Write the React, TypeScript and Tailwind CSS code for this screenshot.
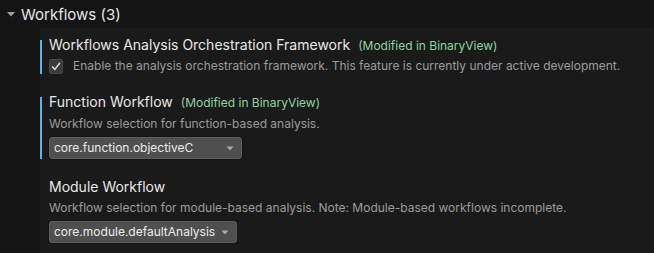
import React from "react";

type Setting = {
  title: string;
  modified?: string;
  description: string;
  kind: "checkbox" | "select";
  value?: string;
  selectWidth?: string;
};

const settings: Setting[] = [
  {
    title: "Workflows Analysis Orchestration Framework",
    modified: "(Modified in BinaryView)",
    description:
      "Enable the analysis orchestration framework. This feature is currently under active development.",
    kind: "checkbox",
  },
  {
    title: "Function Workflow",
    modified: "(Modified in BinaryView)",
    description: "Workflow selection for function-based analysis.",
    kind: "select",
    value: "core.function.objectiveC",
    selectWidth: "w-[193px]",
  },
  {
    title: "Module Workflow",
    description:
      "Workflow selection for module-based analysis. Note: Module-based workflows incomplete.",
    kind: "select",
    value: "core.module.defaultAnalysis",
    selectWidth: "w-[188px]",
  },
];

function Checkbox() {
  return (
    <div className="w-[14px] h-[15px] rounded-[2px] bg-[#3b3b3b] border border-[#474747] flex items-center justify-center shrink-0">
      <svg width="10" height="9" viewBox="0 0 10 9" fill="none">
        <path d="M1.5 4.8 L3.9 7.4 L8.6 1.2" stroke="#dcdcdc" strokeWidth="1.5" strokeLinecap="round" strokeLinejoin="round" />
      </svg>
    </div>
  );
}

function Select({ value, width }: { value: string; width: string }) {
  return (
    <div
      className={`${width} h-[22px] rounded-[3px] bg-[#4f4f4f] border border-[#5e5e5e] shadow-[0_0_0_1px_#141414] flex items-center justify-between pl-[4px] pr-[7px]`}
    >
      <span className="text-[12px] leading-none text-[#ececec] whitespace-nowrap">{value}</span>
      <svg width="8" height="5" viewBox="0 0 8 5" className="shrink-0">
        <path d="M0.5 0.5 H7.5 L4 4.5 Z" fill="#a8a8a8" />
      </svg>
    </div>
  );
}

function SettingItem({ s }: { s: Setting }) {
  return (
    <div className={`border-l-2 pl-[7px] ${s.modified ? "border-[#5cb8de]" : "border-transparent"}`}>
      <div className="flex items-baseline gap-[8px] leading-[10px]">
        <span className="text-[14px] text-[#e8e8e8]">{s.title}</span>
        {s.modified && <span className="text-[12px] text-[#8fd3a0]">{s.modified}</span>}
      </div>
      {s.kind === "checkbox" ? (
        <div className="flex items-center gap-[10px] mt-[7px]">
          <Checkbox />
          <span className="text-[12px] leading-[16px] text-[#9c9c9c]">{s.description}</span>
        </div>
      ) : (
        <>
          <div className="mt-[8px] text-[12px] leading-[16px] text-[#9c9c9c]">{s.description}</div>
          <div className="mt-[5px]">
            <Select value={s.value!} width={s.selectWidth!} />
          </div>
        </>
      )}
    </div>
  );
}

export default function App() {
  return (
    <div
      className="w-[654px] h-[253px] overflow-hidden bg-[#141414] flex flex-col"
      style={{ fontFamily: "Inter, 'Noto Sans', sans-serif" }}
    >
      {/* Group header */}
      <div className="h-[28px] shrink-0 flex items-center pl-[7px] gap-[6px]">
        <svg width="8" height="5" viewBox="0 0 8 5">
          <path d="M0 0 H8 L4 4.5 Z" fill="#a0a0a0" />
        </svg>
        <span className="text-[15px] leading-none text-[#e6e6e6]">Workflows (3)</span>
      </div>

      <div className="flex flex-1">
        <div className="w-[40px] shrink-0" />
        <div className="flex-1 bg-[#1a1a1a] pt-[12px] flex flex-col gap-[23px]">
          {settings.map((s) => (
            <SettingItem key={s.title} s={s} />
          ))}
        </div>
      </div>
    </div>
  );
}
